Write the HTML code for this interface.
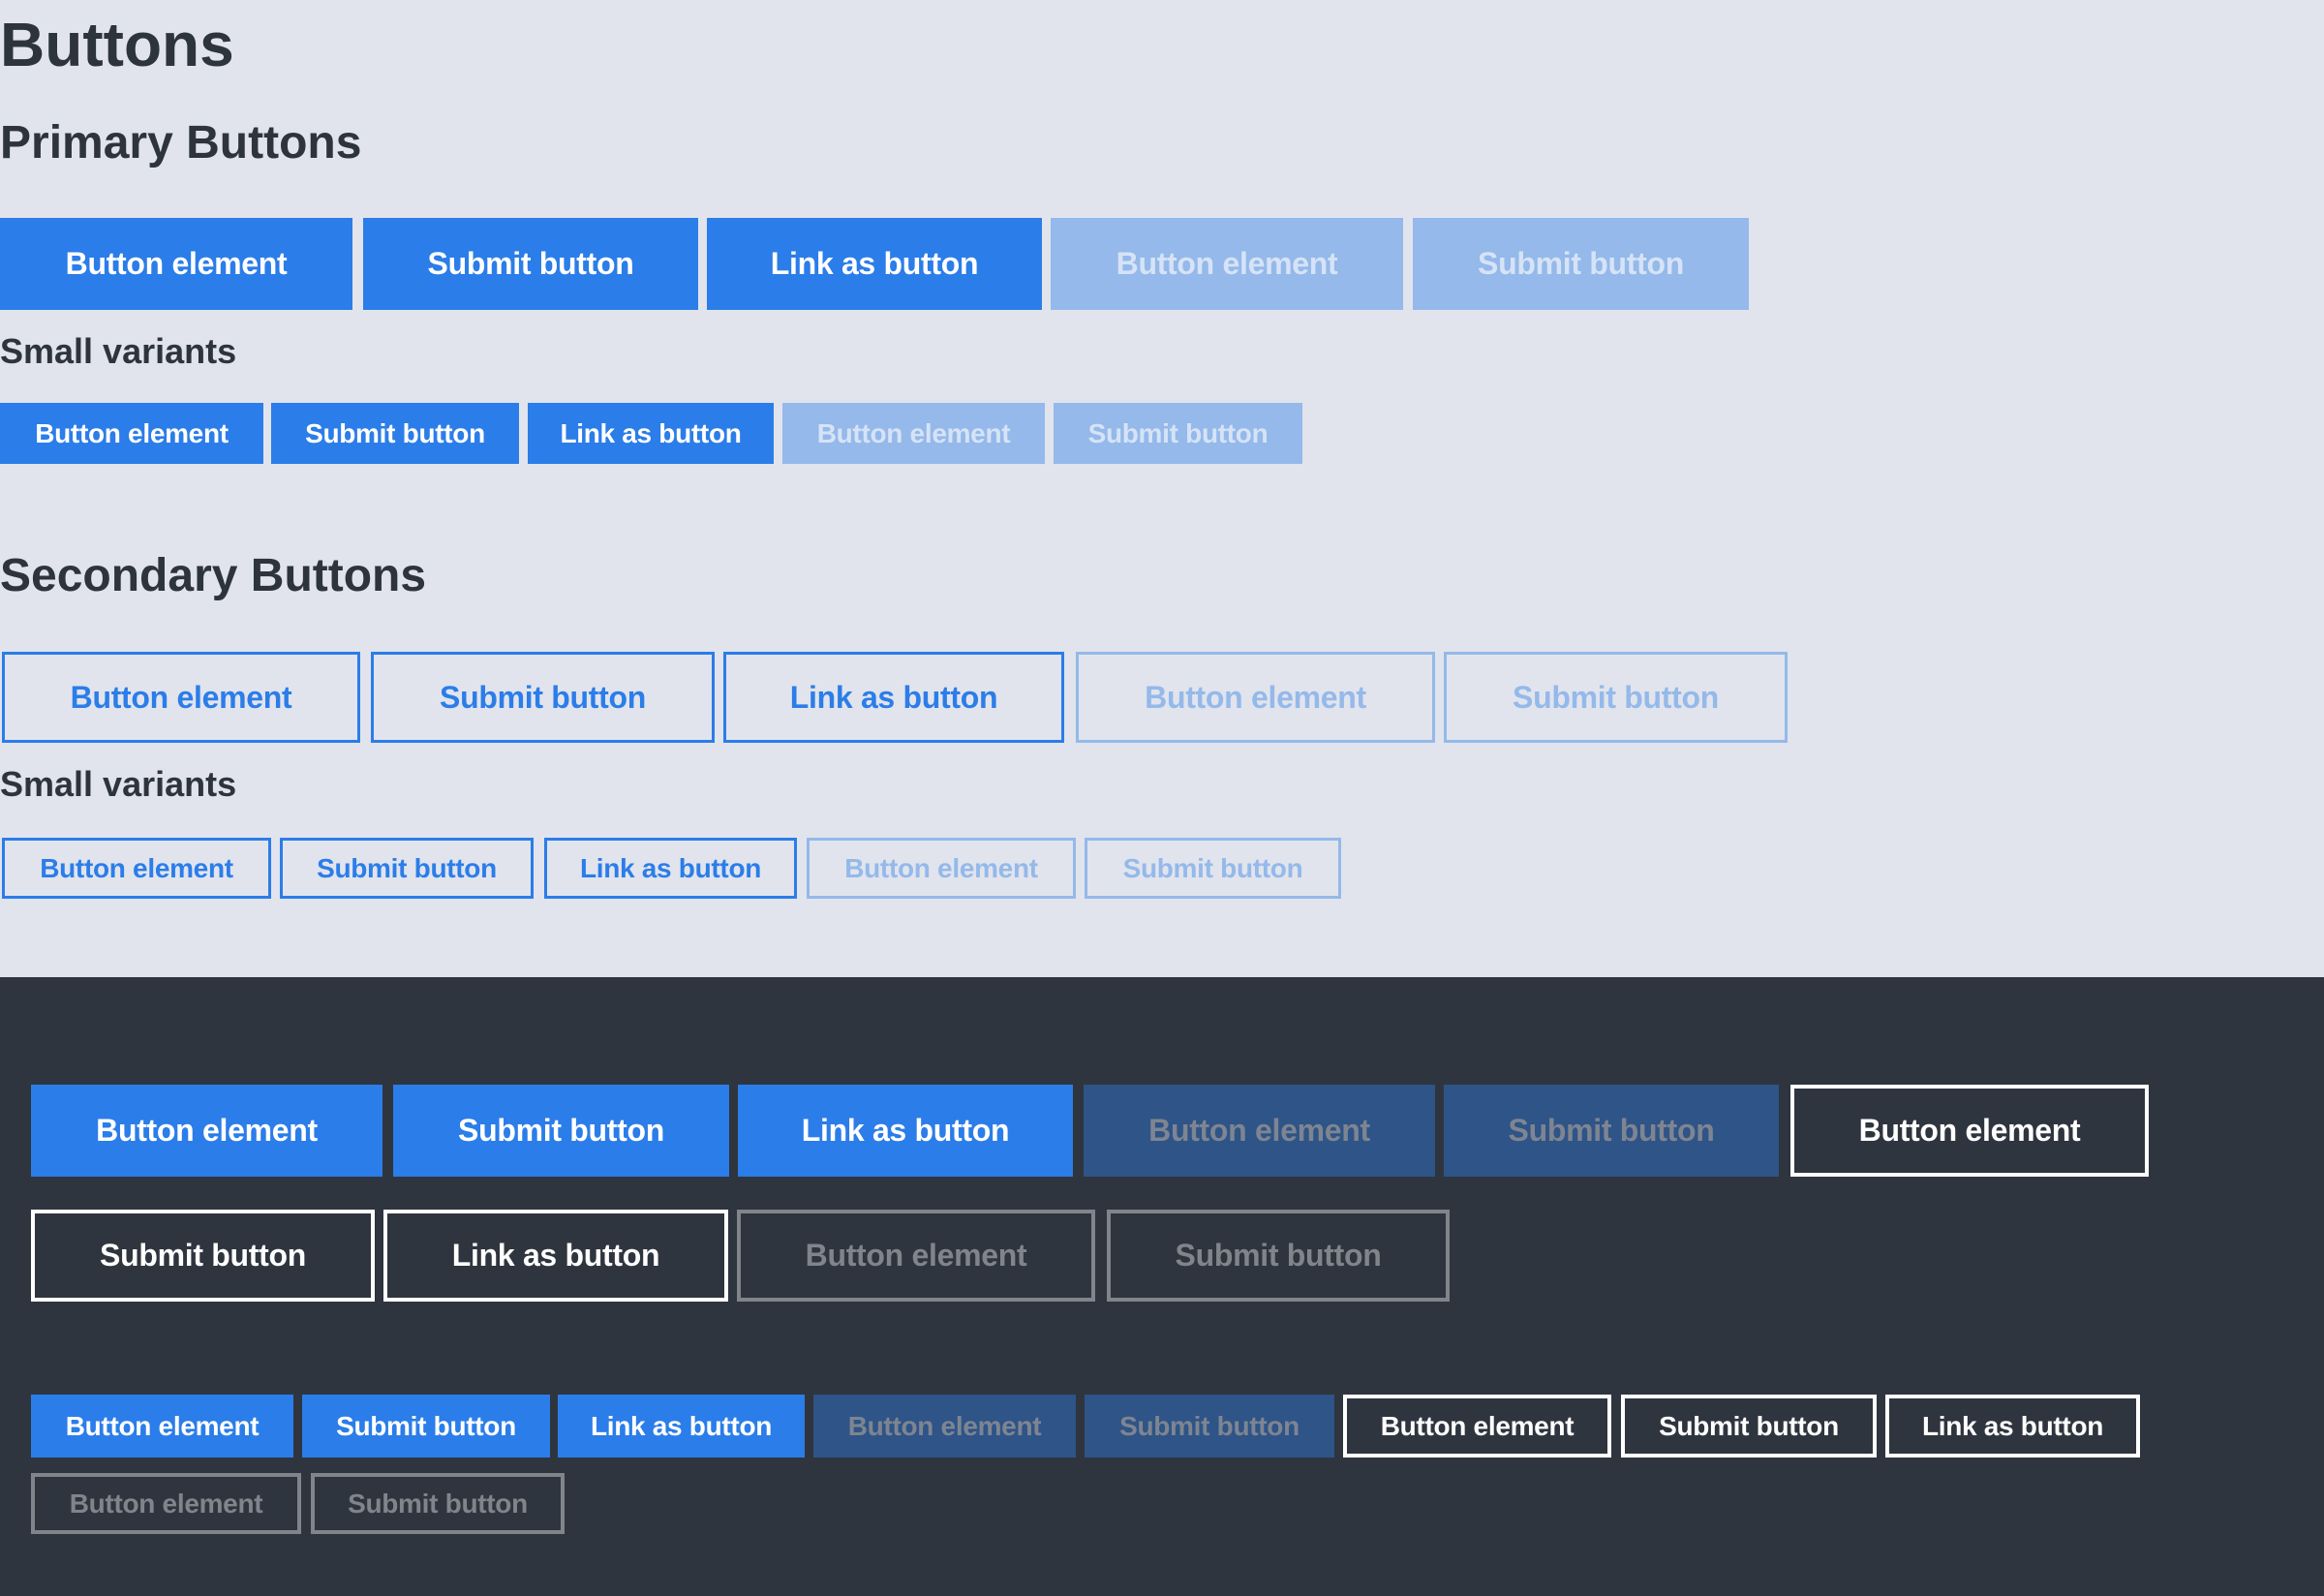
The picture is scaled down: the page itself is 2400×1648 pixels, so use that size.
<!DOCTYPE html>
<html><head><meta charset="utf-8"><style>
*{margin:0;padding:0;box-sizing:border-box}
html,body{width:2400px;height:1648px;overflow:hidden}
body{background:#e1e4ec;font-family:"Liberation Sans",Arial,sans-serif;font-weight:bold;color:#2e343d;position:relative}
.h{position:absolute;left:0;white-space:nowrap;line-height:1}
.b{position:absolute;display:flex;align-items:center;justify-content:center;white-space:nowrap;font-size:32px;letter-spacing:-0.3px}
.s{font-size:28px}
.p{background:#2b7de9;color:#fff}
.pd{background:#94b9ea;color:#d6e3f6}
.o{border:3px solid #2b7de9;color:#2b7de9}
.od{border:3px solid #94b9ea;color:#94b9ea}
.dp{background:#2b7de9;color:#fff}
.dd{background:#2e5488;color:#7e8591}
.dw{border:4px solid #fff;color:#fff}
.dg{border:4px solid #80858c;color:#80858c}
#dark{position:absolute;left:0;top:1009px;width:2400px;height:639px;background:#2f353e}
</style></head><body>
<div class="h" style="top:14px;font-size:64px">Buttons</div>
<div class="h" style="top:124px;font-size:48px">Primary Buttons</div>
<div class="b p" style="left:0;top:225px;width:364px;height:95px">Button element</div>
<div class="b p" style="left:375px;top:225px;width:346px;height:95px">Submit button</div>
<div class="b p" style="left:730px;top:225px;width:346px;height:95px">Link as button</div>
<div class="b pd" style="left:1085px;top:225px;width:364px;height:95px">Button element</div>
<div class="b pd" style="left:1459px;top:225px;width:347px;height:95px">Submit button</div>
<div class="h" style="top:345px;font-size:36px">Small variants</div>
<div class="b s p" style="left:0;top:416px;width:272px;height:63px">Button element</div>
<div class="b s p" style="left:280px;top:416px;width:256px;height:63px">Submit button</div>
<div class="b s p" style="left:545px;top:416px;width:254px;height:63px">Link as button</div>
<div class="b s pd" style="left:808px;top:416px;width:271px;height:63px">Button element</div>
<div class="b s pd" style="left:1088px;top:416px;width:257px;height:63px">Submit button</div>
<div class="h" style="top:571px;font-size:48px">Secondary Buttons</div>
<div class="b o" style="left:2px;top:673px;width:370px;height:94px">Button element</div>
<div class="b o" style="left:383px;top:673px;width:355px;height:94px">Submit button</div>
<div class="b o" style="left:747px;top:673px;width:352px;height:94px">Link as button</div>
<div class="b od" style="left:1111px;top:673px;width:371px;height:94px">Button element</div>
<div class="b od" style="left:1491px;top:673px;width:355px;height:94px">Submit button</div>
<div class="h" style="top:792px;font-size:36px">Small variants</div>
<div class="b s o" style="left:2px;top:865px;width:278px;height:63px">Button element</div>
<div class="b s o" style="left:289px;top:865px;width:262px;height:63px">Submit button</div>
<div class="b s o" style="left:562px;top:865px;width:261px;height:63px">Link as button</div>
<div class="b s od" style="left:833px;top:865px;width:278px;height:63px">Button element</div>
<div class="b s od" style="left:1120px;top:865px;width:265px;height:63px">Submit button</div>
<div id="dark"></div>
<div class="b dp" style="left:32px;top:1120px;width:363px;height:95px">Button element</div>
<div class="b dp" style="left:406px;top:1120px;width:347px;height:95px">Submit button</div>
<div class="b dp" style="left:762px;top:1120px;width:346px;height:95px">Link as button</div>
<div class="b dd" style="left:1119px;top:1120px;width:363px;height:95px">Button element</div>
<div class="b dd" style="left:1491px;top:1120px;width:346px;height:95px">Submit button</div>
<div class="b dw" style="left:1849px;top:1120px;width:370px;height:95px">Button element</div>
<div class="b dw" style="left:32px;top:1249px;width:355px;height:95px">Submit button</div>
<div class="b dw" style="left:396px;top:1249px;width:356px;height:95px">Link as button</div>
<div class="b dg" style="left:761px;top:1249px;width:370px;height:95px">Button element</div>
<div class="b dg" style="left:1143px;top:1249px;width:354px;height:95px">Submit button</div>
<div class="b s dp" style="left:32px;top:1440px;width:271px;height:65px">Button element</div>
<div class="b s dp" style="left:312px;top:1440px;width:256px;height:65px">Submit button</div>
<div class="b s dp" style="left:576px;top:1440px;width:255px;height:65px">Link as button</div>
<div class="b s dd" style="left:840px;top:1440px;width:271px;height:65px">Button element</div>
<div class="b s dd" style="left:1120px;top:1440px;width:258px;height:65px">Submit button</div>
<div class="b s dw" style="left:1387px;top:1440px;width:277px;height:65px">Button element</div>
<div class="b s dw" style="left:1674px;top:1440px;width:264px;height:65px">Submit button</div>
<div class="b s dw" style="left:1947px;top:1440px;width:263px;height:65px">Link as button</div>
<div class="b s dg" style="left:32px;top:1521px;width:279px;height:63px">Button element</div>
<div class="b s dg" style="left:321px;top:1521px;width:262px;height:63px">Submit button</div>
</body></html>
